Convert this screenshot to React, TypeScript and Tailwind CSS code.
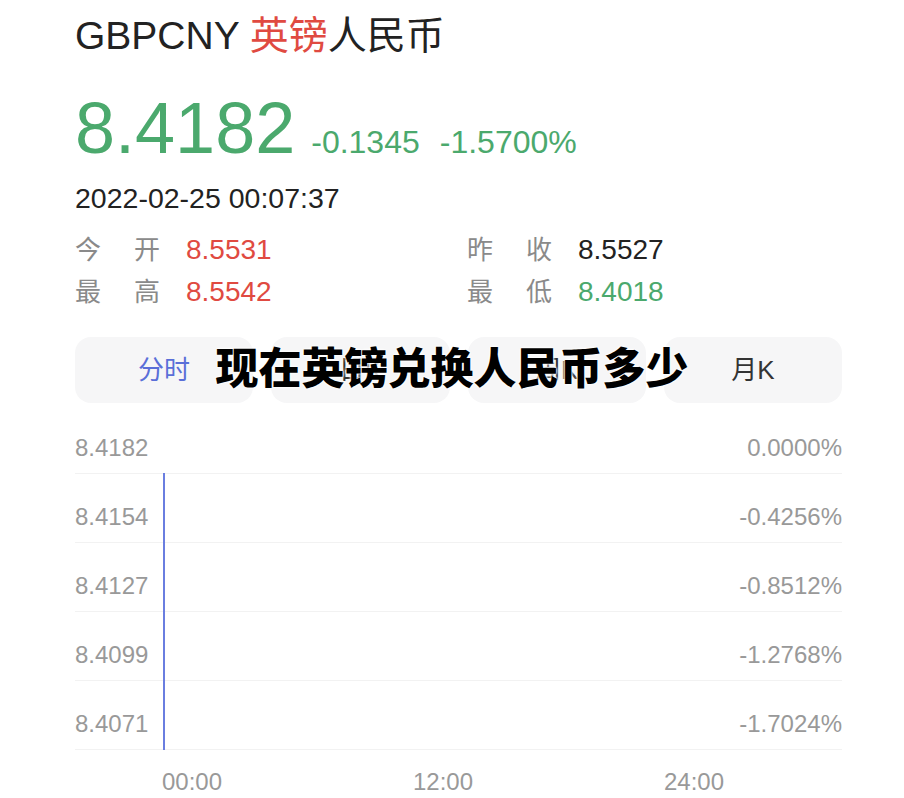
const font = "font-['Liberation_Sans','Noto_Sans_CJK_SC',sans-serif]";

const stats = [
  [
    { label: ["今", "开"], value: "8.5531", color: "text-[#e04a41]" },
    { label: ["昨", "收"], value: "8.5527", color: "text-[#222]" },
  ],
  [
    { label: ["最", "高"], value: "8.5542", color: "text-[#e04a41]" },
    { label: ["最", "低"], value: "8.4018", color: "text-[#4ba96d]" },
  ],
];

const tabs = ["分时", "日K", "周K", "月K"];

const rows = [
  ["8.4182", "0.0000%"],
  ["8.4154", "-0.4256%"],
  ["8.4127", "-0.8512%"],
  ["8.4099", "-1.2768%"],
  ["8.4071", "-1.7024%"],
];

export default function App() {
  return (
    <div className={`relative w-[904px] h-[798px] overflow-hidden bg-white pl-[75px] pr-[62px] pt-[13px] ${font}`}>
      <h1 className="text-[39px] leading-[46px] text-[#222]">
        GBPCNY <span className="text-[#e04a41]">英镑</span>人民币
      </h1>

      <div className="mt-[33px] flex items-baseline text-[#4ba96d]">
        <span className="text-[72px] leading-[72px]">8.4182</span>
        <span className="ml-[16px] text-[32px]">-0.1345</span>
        <span className="ml-[20px] text-[32px]">-1.5700%</span>
      </div>

      <p className="mt-[15px] text-[28.5px] leading-[34px] text-[#222]">2022-02-25 00:07:37</p>

      <div className="mt-[14px]">
        {stats.map((row, i) => (
          <div key={i} className="grid grid-cols-[392px_1fr] text-[28px] leading-[42px]">
            {row.map((s) => (
              <div key={s.value} className="flex items-center">
                <span className="flex w-[85px] justify-between text-[26px] text-[#8a8a8a]">
                  <span>{s.label[0]}</span>
                  <span>{s.label[1]}</span>
                </span>
                <span className={`ml-[26px] ${s.color}`}>{s.value}</span>
              </div>
            ))}
          </div>
        ))}
      </div>

      <div className="mt-[24px] grid grid-cols-4 gap-[18px]">
        {tabs.map((t, i) => (
          <div
            key={t}
            className={`flex h-[66px] items-center justify-center rounded-[16px] bg-[#f6f6f7] text-[26px] ${
              i === 0 ? "text-[#5a6fd8]" : "text-[#333]"
            }`}
          >
            {t}
          </div>
        ))}
      </div>

      <div className="relative mt-[2px]">
        {rows.map(([l, r]) => (
          <div
            key={l}
            className="flex h-[69px] items-end justify-between border-b border-[#f2f2f2] pb-[11px] text-[24px] leading-[28px] text-[#999]"
          >
            <span>{l}</span>
            <span>{r}</span>
          </div>
        ))}
        <div className="absolute left-[88px] top-[68px] h-[277px] w-[2px] bg-[#6a7ee0]" />
      </div>

      <div className="flex justify-between pl-[87px] pr-[118px] pt-[18px] text-[24px] leading-[28px] text-[#999]">
        <span>00:00</span>
        <span>12:00</span>
        <span>24:00</span>
      </div>

      <div className="absolute left-0 right-0 top-[335px] text-center font-['Noto_Sans_CJK_SC',sans-serif] text-[43px] font-black leading-[60px] text-black [text-shadow:0_0_3px_#fff,0_0_3px_#fff,0_0_2px_#fff]">
        现在英镑兑换人民币多少
      </div>
    </div>
  );
}
